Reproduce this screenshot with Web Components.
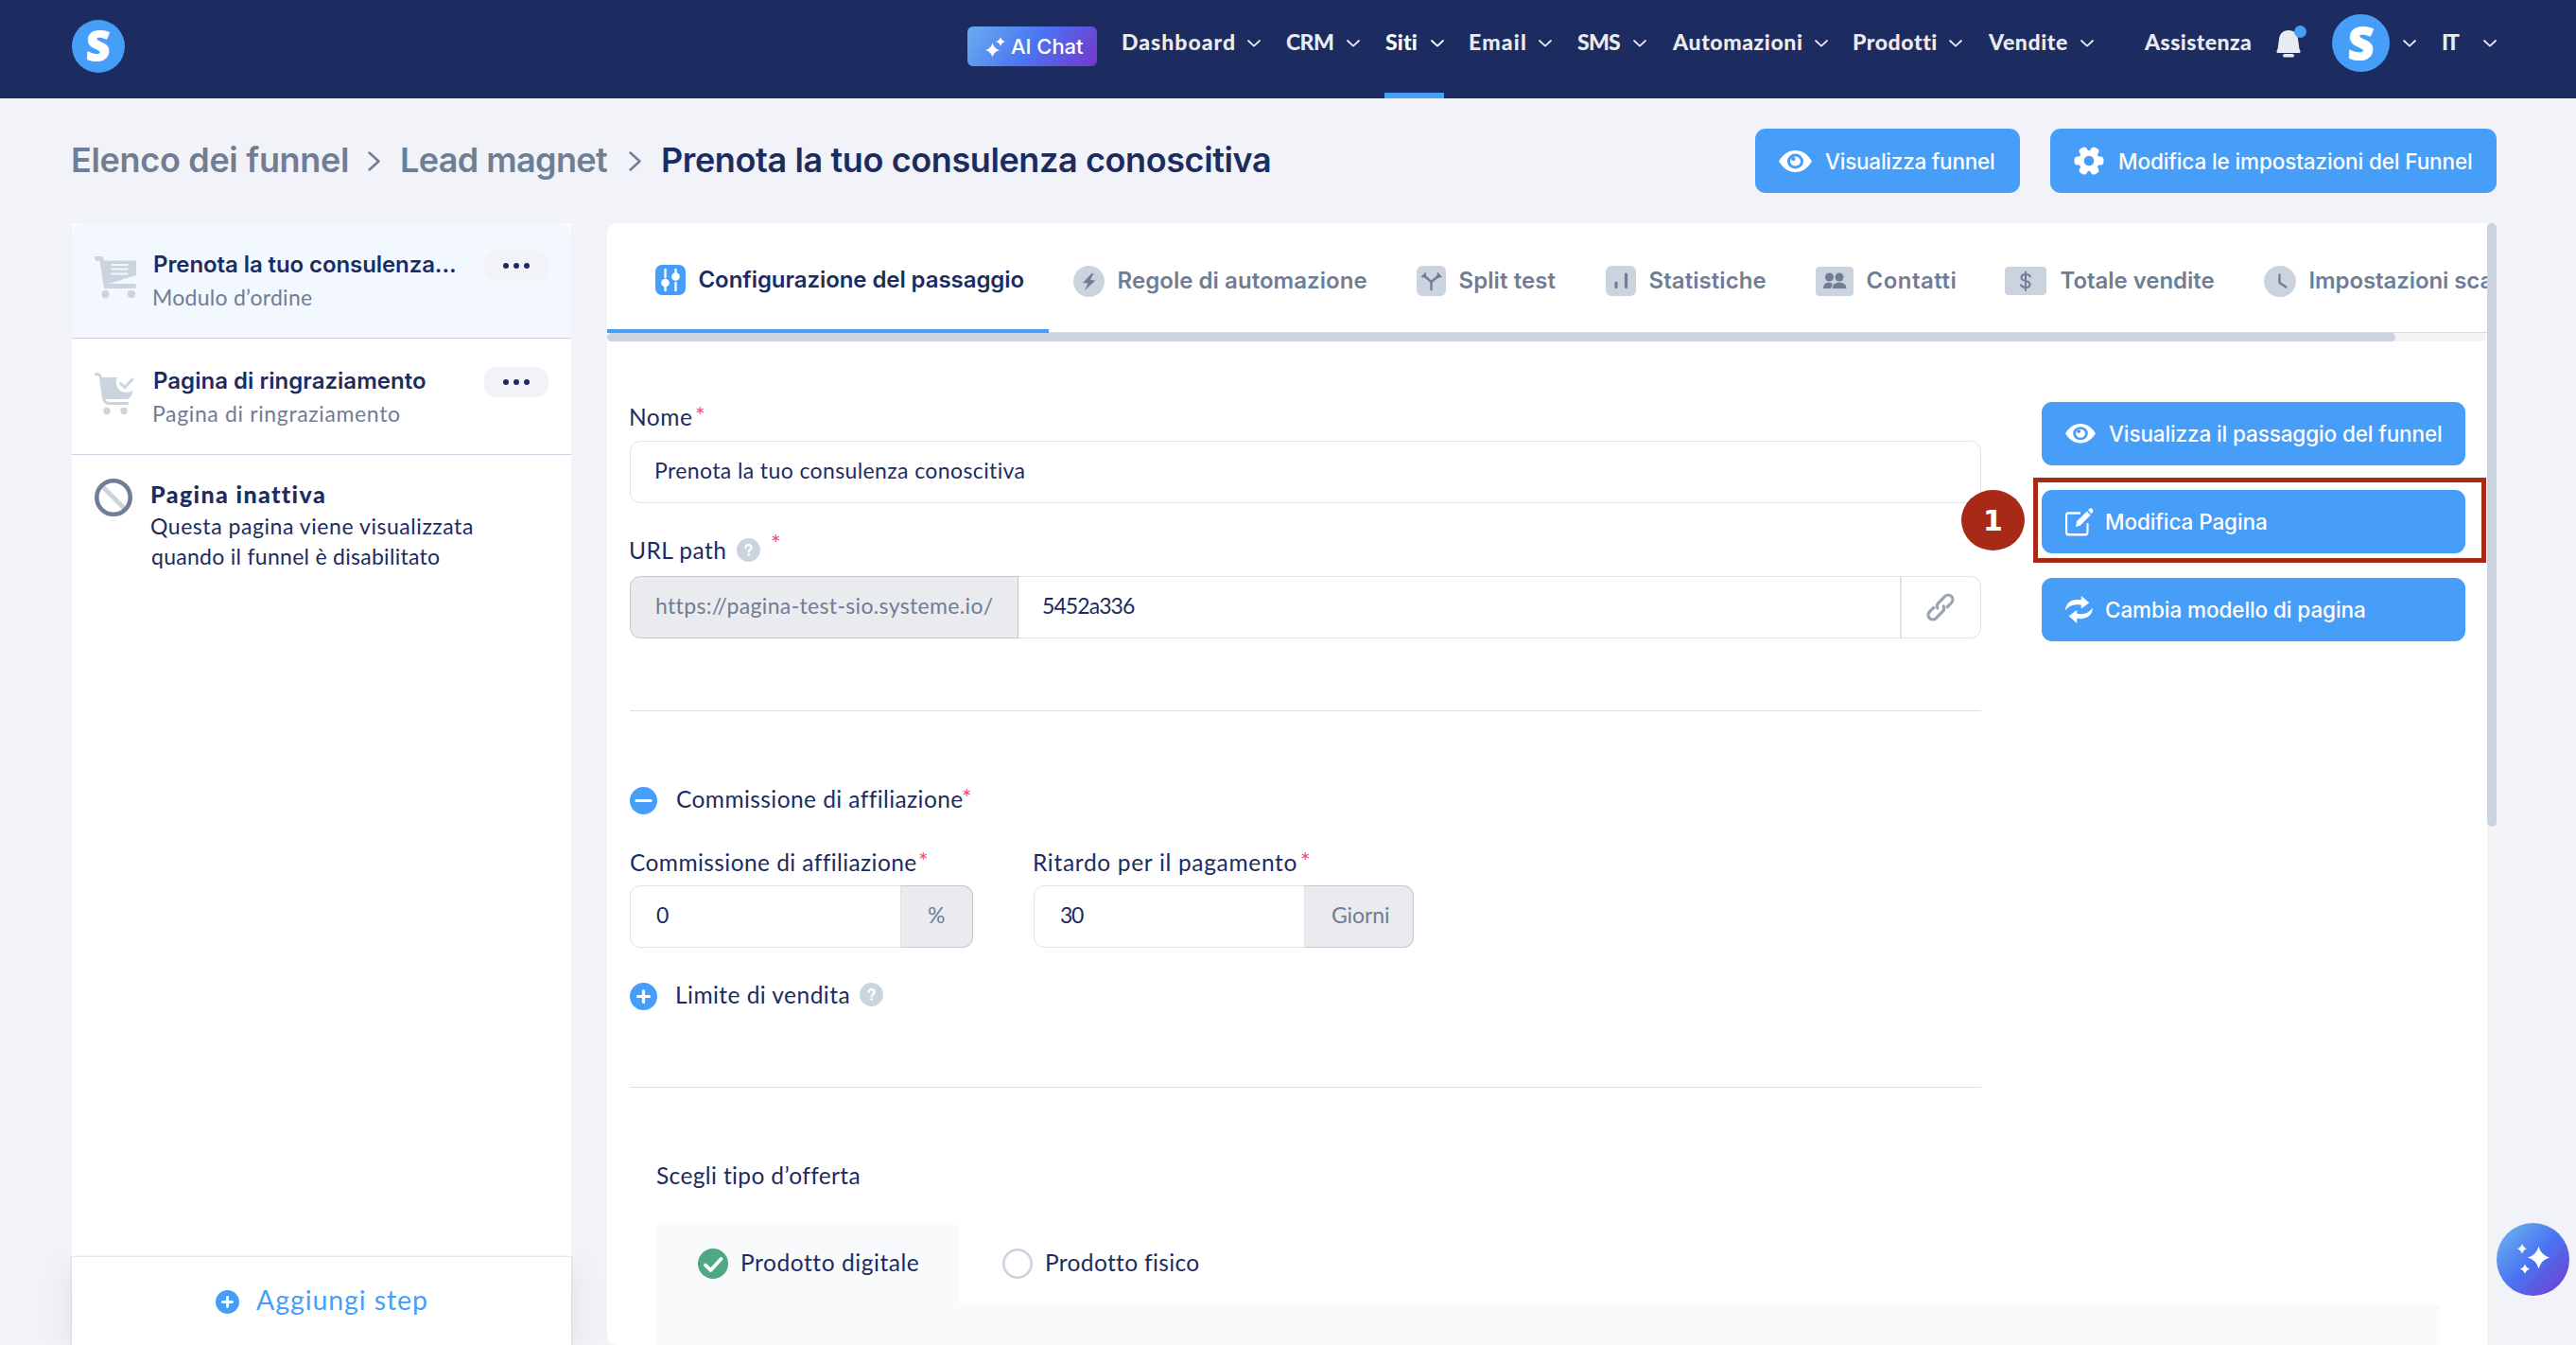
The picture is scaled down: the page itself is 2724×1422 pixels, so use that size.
<!DOCTYPE html>
<html lang="it">
<head>
<meta charset="utf-8">
<title>Prenota la tuo consulenza conoscitiva</title>
<style>
  html, body {
    margin: 0;
    width: 2724px;
    height: 1422px;
    overflow: hidden;
    background: #f2f3f8;
    color: #1c2c60;
    font-family: Lato, "Open Sans", sans-serif;
    font-size: 23px;
  }
</style>
</head>
<body>
<funnel-app></funnel-app>

<script>
const icons = {
  chevron: `<svg width="14" height="8" viewBox="0 0 14 8"><path d="M1 1l6 5.6L13 1" fill="none" stroke="currentColor" stroke-width="1.8" stroke-linecap="round" stroke-linejoin="round"/></svg>`,
  next: `<svg width="13" height="21" viewBox="0 0 13 21"><path d="M1.5 1.5l10 9-10 9" fill="none" stroke="currentColor" stroke-width="2.5" stroke-linecap="round" stroke-linejoin="round"/></svg>`,
  sparkle: `<svg width="22" height="23" viewBox="0 0 22 23"><path d="M7.500 7.500Q9 13.500 15 15Q9 16.500 7.500 22.500Q6 16.500 0 15Q6 13.500 7.500 7.500zM16 1Q17 5 21 6Q17 7 16 11Q15 7 11 6Q15 5 16 1z" fill="#fff"/></svg>`,
  bell: `<svg width="26" height="30" viewBox="0 0 26 30"><path d="M13 0C7 0 3.500 4 3 9.500L1.500 20 .6 21.500Q0 24 2 24h22q2 0 1.400-2.500L24.500 20 23 9.500C22.500 4 19 0 13 0z" fill="#e9ebf0"/><rect x="7" y="25" width="12" height="3.500" rx="1.700" fill="#e9ebf0"/></svg>`,
  eye: `<svg width="35" height="23" viewBox="0 0 34 24" preserveAspectRatio="none"><path d="M0 12C4 4.500 10 0 17 0s13 4.500 17 12c-4 7.500-10 12-17 12S4 19.500 0 12z" fill="#fff"/><circle cx="17" cy="12" r="8.300" fill="#479ef9"/><circle cx="17" cy="12" r="5.300" fill="#fff"/><circle cx="15" cy="9.500" r="2.200" fill="#479ef9"/></svg>`,
  eyeSmall: `<svg width="32" height="20.500" viewBox="0 0 34 24" preserveAspectRatio="none"><path d="M0 12C4 4.500 10 0 17 0s13 4.500 17 12c-4 7.500-10 12-17 12S4 19.500 0 12z" fill="#fff"/><circle cx="17" cy="12" r="8.300" fill="#479ef9"/><circle cx="17" cy="12" r="5.300" fill="#fff"/><circle cx="15" cy="9.500" r="2.200" fill="#479ef9"/></svg>`,
  gear: `<svg width="32" height="32" viewBox="0 0 32 32"><g fill="#fff"><circle cx="16" cy="16" r="11"/><rect x="11.500" y=".5" width="9" height="31" rx="3.500" transform="rotate(30 16 16)"/><rect x="11.500" y=".5" width="9" height="31" rx="3.500" transform="rotate(90 16 16)"/><rect x="11.500" y=".5" width="9" height="31" rx="3.500" transform="rotate(150 16 16)"/></g><circle cx="16" cy="16" r="5.300" fill="#479ef9"/></svg>`,
  edit: `<svg width="30" height="30" viewBox="0 0 34 30" preserveAspectRatio="none"><path d="M18 5.500H3.500Q1.200 5.500 1.200 8v17.500q0 2.800 2.600 2.800H24q2.600 0 2.600-2.800V16" fill="none" stroke="#fff" stroke-width="2.400"/><path d="M26 3.500l4.300 4L18 18.500 12.500 20l1.300-6zM27.300 2.300L29 .8q2-1.300 3.600.4 1.500 1.800 0 3.500l-1.300 1.500z" fill="#fff"/></svg>`,
  refresh: `<svg width="29" height="29" viewBox="0 0 32 30" preserveAspectRatio="none"><path d="M0 16C.5 7 8 2.500 18.500 4.500L18.500 0 28 7.500 18.500 14V10C10 8.500 4 10.500 0 16zM32 13c-.5 9-8 13.500-18.500 11.500V30L4 22l9.500-6.500V19.500C22 21 28 18.500 32 13z" fill="#fff"/></svg>`,
  cart: `<svg width="44" height="44" viewBox="0 0 44 44"><g fill="#cbd3df"><path d="M0 0h7q2 0 2.500 2.500L10 4.500h34V20L15 29h27q2 0 2 2.500T42 34H10L5.500 5H3Q0 4.500 0 0z"/><circle cx="11.500" cy="40" r="4.200"/><circle cx="39" cy="40" r="4.200"/></g><path d="M18.500 9h16M18.500 13.500h16M18.500 18.500h16" stroke="#f3f8ff" stroke-width="2" stroke-linecap="round"/></svg>`,
  cartCheck: `<svg width="42" height="44" viewBox="0 0 42 44"><g fill="#cbd3df"><path d="M6 5h18q-3 6 1 12 6 7 16 2l-2 5q-2 4-6 4H10z"/><circle cx="13" cy="40.500" r="3.700"/><circle cx="31" cy="40.500" r="3.700"/></g><path d="M1.500 1.500Q6 1.500 6.500 5l3 22q1 5.500 6 5.500H35M27.500 11.500l4.500 4L40 7" fill="none" stroke="#cbd3df" stroke-width="3" stroke-linecap="round"/></svg>`,
  ban: `<svg width="40" height="40" viewBox="0 0 40 40"><path d="M8.500 8.500l23 23" stroke="#cbd3df" stroke-width="5"/><circle cx="20" cy="20" r="17.700" fill="none" stroke="#6f7d95" stroke-width="4.600"/></svg>`,
  sliders: `<svg width="32" height="32" viewBox="0 0 32 32"><rect width="32" height="32" rx="7" fill="#479ef9"/><path d="M10.500 5v8M10.500 18v9M21.500 5v8M21.500 19v8" stroke="#fff" stroke-width="2.400" stroke-linecap="round"/><circle cx="10.500" cy="19" r="4.300" fill="#fff"/><circle cx="21.500" cy="12.500" r="4.300" fill="#fff"/></svg>`,
  bolt: `<svg width="33" height="33" viewBox="0 0 33 33"><circle cx="16.500" cy="16.500" r="16.500" fill="#cbd3df"/><path d="M19.500 8L10 18l5.500.5-3.500 7.500L23.500 15.500 18 15l3.500-7z" fill="#6f7d95"/></svg>`,
  split: `<svg width="31" height="32" viewBox="0 0 31 32"><rect width="31" height="32" rx="6" fill="#cbd3df"/><path d="M15.500 25V17L8 10.500M15.500 17l8-6.500" fill="none" stroke="#6f7d95" stroke-width="2.400" stroke-linecap="round"/><path d="M4.500 12L9.500 6.500 10.500 13zM27 12l-5-5.500-1 6.500z" fill="#6f7d95"/></svg>`,
  chart: `<svg width="32" height="32" viewBox="0 0 32 32"><rect width="32" height="32" rx="6" fill="#cbd3df"/><path d="M11 18v4.500M21.500 9v13.500" stroke="#6f7d95" stroke-width="3.200" stroke-linecap="round"/></svg>`,
  people: `<svg width="40" height="31" viewBox="0 0 40 31"><rect width="40" height="31" rx="4" fill="#cbd3df"/><g fill="#6f7d95"><circle cx="14.500" cy="11" r="4.500"/><circle cx="25" cy="11" r="4.500"/><path d="M8 23q0-6.500 6-6.500l4 1.500-2 5zM17.500 23q.5-6.500 7.500-6.500t7.500 6.500z"/></g></svg>`,
  dollar: `<svg width="44" height="30" viewBox="0 0 44 30"><rect width="44" height="30" rx="4" fill="#cbd3df"/><path d="M27 10.500Q26 8 22 8q-4.500 0-4.500 3.500 0 2.500 4.500 3.500t4.500 3.800Q26.500 22 22 22q-4 0-5-2.800M22 5.500V25" fill="none" stroke="#6f7d95" stroke-width="2" stroke-linecap="round"/></svg>`,
  clock: `<svg width="34" height="33" viewBox="0 0 34 33"><ellipse cx="17" cy="16.500" rx="17" ry="16.500" fill="#cbd3df"/><path d="M16.500 9.500V18l7 4.500" fill="none" stroke="#6f7d95" stroke-width="2.300" stroke-linecap="round" stroke-linejoin="round"/></svg>`,
  help: `<svg width="25" height="25" viewBox="0 0 25 25"><circle cx="12.500" cy="12.500" r="12.500" fill="#cbd3df"/><path d="M9.600 10q0-2.800 3-2.800t3 2.600q0 1.500-1.500 2.400-1.300.8-1.300 2.200" fill="none" stroke="#fff" stroke-width="2.200" stroke-linecap="round"/><circle cx="12.700" cy="17.600" r="1.400" fill="#fff"/></svg>`,
  link: `<svg width="30" height="30" viewBox="0 0 30 30"><g transform="translate(15 15) rotate(-45)" fill="none" stroke="#9aa5b1" stroke-width="3.200" stroke-linecap="round"><path d="M-5.500-4.800H-11.500a4.800 4.800 0 0 0 0 9.600H-1.500a4.800 4.800 0 0 0 4.500-3.300"/><path d="M5.500 4.800H11.500a4.800 4.800 0 0 0 0-9.600H1.500a4.800 4.800 0 0 0-4.500 3.300"/></g></svg>`,
  minus: `<svg width="29" height="29" viewBox="0 0 29 29"><circle cx="14.500" cy="14.500" r="14.500" fill="#479ef9"/><path d="M7 14.500h15" stroke="#fff" stroke-width="3.200" stroke-linecap="round"/></svg>`,
  plus: `<svg width="29" height="29" viewBox="0 0 29 29"><circle cx="14.500" cy="14.500" r="14.500" fill="#479ef9"/><path d="M8.500 14.500h12M14.500 8.500v12" stroke="#fff" stroke-width="3.200" stroke-linecap="round"/></svg>`,
  plusSmall: `<svg width="25" height="25" viewBox="0 0 25 25"><circle cx="12.500" cy="12.500" r="12.500" fill="#479ef9"/><path d="M7.500 12.500h10M12.500 7.500v10" stroke="#fff" stroke-width="2.800" stroke-linecap="round"/></svg>`,
  check: `<svg width="32" height="32" viewBox="0 0 32 32"><circle cx="16" cy="16" r="16" fill="#50a882"/><path d="M8 17.500l5.500 5.500 11-12" fill="none" stroke="#fff" stroke-width="3.800" stroke-linecap="round" stroke-linejoin="round"/></svg>`,
  radio: `<svg width="32" height="32" viewBox="0 0 32 32"><circle cx="16" cy="16" r="14.700" fill="none" stroke="#cbd3df" stroke-width="2.600"/></svg>`,
  stars: `<svg width="36" height="34" viewBox="0 0 36 34"><path d="M23.500 3Q26 12 35 14.500Q26 17 23.500 26.500Q21 17 12 14.500Q21 12 23.500 3zM6 0Q7.300 4 11 5.200Q7.300 6.500 6 10.500Q4.700 6.500 1 5.200Q4.700 4 6 0zM9 21.500Q10.300 25.300 14 26.500Q10.300 27.800 9 31.500Q7.700 27.800 4 26.500Q7.700 25.300 9 21.500z" fill="#fff"/></svg>`
};

function define(name, render) {
  customElements.define(name, class extends HTMLElement {
    constructor() {
      super();
      this.attachShadow({ mode: "open" });
    }
    connectedCallback() {
      const attr = (key) => this.getAttribute(key) || "";
      this.shadowRoot.innerHTML = render(attr);
    }
  });
}

define("ui-icon", (attr) => `
  <style>:host { display: inline-flex; flex: none; } svg { display: block; overflow: visible; }</style>
  ${icons[attr("name")]}
`);

define("brand-mark", (attr) => `
  <style>
    :host {
      display: flex; flex: none; align-items: center; justify-content: center;
      width: ${attr("size")}px; height: ${attr("size")}px;
      border-radius: 50%; background: #479ef9; color: #fff;
      font: 800 ${attr("size") * 0.78}px/1 "Open Sans", sans-serif;
    }
    span { transform: translateY(-1px) skewX(-2deg); -webkit-text-stroke: 1px #fff; }
  </style>
  <span>S</span>
`);

define("nav-item", (attr) => `
  <style>
    :host {
      display: flex; flex: none; align-items: center; gap: 14px; height: 104px;
      box-sizing: border-box; padding-bottom: 17px; margin-right: 26px;
      color: #e9ebf0; font-weight: 900; font-size: 23px;
    }
    :host([active]) { color: #fff; box-shadow: inset 0 -6px #479ef9; }
    ui-icon { padding-top: 4px; }
  </style>
  <fit-text w="${attr("w")}"><slot></slot></fit-text><ui-icon name="chevron"></ui-icon>
`);

define("app-bar", () => `
  <style>
    :host { display: flex; height: 104px; padding-left: 76px; background: #1c2c60; align-items: flex-start; }
    .logo { margin-top: 21px; }
    .chat {
      display: flex; align-items: center; gap: 4px; margin: 28px 26px 0 891px;
      width: 137px; height: 42px; box-sizing: border-box; padding-left: 19px;
      border-radius: 6px; background: linear-gradient(125deg, #69aeef, #4b74f2 50%, #7437cb);
      color: #fff; font: 500 22px Inter, sans-serif;
    }
    .plain { display: flex; align-items: center; height: 87px; color: #e9ebf0; font-weight: 900; font-size: 23px; }
    .help { margin: 0 27px 0 26px; }
    .bell { position: relative; margin-top: 32px; }
    .dot { position: absolute; left: 19px; top: -5px; width: 13px; height: 13px; border-radius: 50%; background: #479ef9; }
    .avatar { margin: 15px 14px 0 33px; }
    .down { margin-top: 42px; color: #e9ebf0; }
  </style>
  <brand-mark class="logo" size="56"></brand-mark>
  <div class="chat"><ui-icon name="sparkle"></ui-icon><fit-text w="78">AI Chat</fit-text></div>
  <nav-item w="119">Dashboard</nav-item>
  <nav-item w="51">CRM</nav-item>
  <nav-item w="35" active>Siti</nav-item>
  <nav-item w="60">Email</nav-item>
  <nav-item w="46">SMS</nav-item>
  <nav-item w="138">Automazioni</nav-item>
  <nav-item w="88">Prodotti</nav-item>
  <nav-item w="85">Vendite</nav-item>
  <div class="plain help"><fit-text w="114">Assistenza</fit-text></div>
  <div class="bell"><ui-icon name="bell"></ui-icon><div class="dot"></div></div>
  <brand-mark class="avatar" size="61"></brand-mark>
  <ui-icon class="down" name="chevron"></ui-icon>
  <div class="plain" style="margin: 0 25px 0 27px"><fit-text w="19">IT</fit-text></div>
  <ui-icon class="down" name="chevron"></ui-icon>
`);

define("action-button", (attr) => `
  <style>
    :host {
      display: flex; flex: none; align-items: center; box-sizing: border-box;
      width: ${attr("width")}px; height: ${attr("height") || 67}px; padding-left: 25px;
      border-radius: 11px; background: #479ef9; color: #fff;
      font: 500 22.5px Inter, sans-serif;
    }
    ui-icon { width: ${attr("box")}px; }
  </style>
  <ui-icon name="${attr("icon")}"></ui-icon><fit-text w="${attr("w")}"><slot></slot></fit-text>
`);

define("page-heading", () => `
  <style>
    :host { display: flex; height: 132px; align-items: center; padding: 0 84px 0 76px; color: #6f7d95; }
    .crumbs { display: flex; align-items: center; gap: 22px; font: 600 36px Inter, sans-serif; }
    .crumbs fit-text { margin-top: -2px; }
    .current { color: #1c2c60; }
    .actions { display: flex; gap: 32px; margin-left: auto; }
  </style>
  <div class="crumbs">
    <fit-text w="291">Elenco dei funnel</fit-text><ui-icon name="next"></ui-icon>
    <fit-text w="219">Lead magnet</fit-text><ui-icon name="next"></ui-icon>
    <fit-text class="current" w="643">Prenota la tuo consulenza conoscitiva</fit-text>
  </div>
  <div class="actions">
    <action-button icon="eye" width="280" height="68" box="48" w="180">Visualizza funnel</action-button>
    <action-button icon="gear" width="472" height="68" box="47" w="374">Modifica le impostazioni del Funnel</action-button>
  </div>
`);

define("step-card", (attr) => `
  <style>
    :host {
      display: flex; align-items: flex-start; box-sizing: border-box;
      height: ${attr("height")}px; padding: ${attr("pad")}px 24px 0; border-bottom: 1px solid #cbd3e3;
    }
    :host([active]) { background: #f3f8ff; border-radius: 10px 10px 0 0; }
    .icon { width: 62px; padding-top: 6px; }
    .text { display: flex; flex-direction: column; }
    .title { font: 600 24px/30px Inter, sans-serif; }
    .kind { color: #6f7d95; line-height: 30px; margin-top: 4px; }
    .menu {
      display: flex; align-items: center; justify-content: center; gap: 4.500px;
      width: 68px; height: 32px; margin-left: auto; border-radius: 13px; background: #f2f3f8;
    }
    i { width: 6.500px; height: 6.500px; border-radius: 50%; background: #1c2c60; }
  </style>
  <ui-icon class="icon" name="${attr("icon")}"></ui-icon>
  <div class="text">
    <fit-text class="title" w="${attr("tw")}"><slot></slot></fit-text>
    <fit-text class="kind" w="${attr("kw")}">${attr("kind")}</fit-text>
  </div>
  <div class="menu"><i></i><i></i><i></i></div>
`);

define("step-list", () => `
  <style>
    :host { display: flex; flex-direction: column; width: 528px; height: 1186px; background: #fff; }
    .inactive { display: flex; padding: 25px 24px 0; }
    .inactive ui-icon { width: 59px; }
    .title { font-weight: 900; font-size: 25px; line-height: 30px; margin-bottom: 3px; }
    .note { line-height: 32px; }
    .add {
      display: flex; align-items: center; gap: 17px; box-sizing: border-box; height: 93px; margin-top: auto;
      padding: 2px 0 0 152px; background: #fff; color: #479ef9; font-size: 28.5px;
      box-shadow: 0 0 2px rgba(0,0,0,.22), 0 8px 30px rgba(110,130,160,.14); clip-path: inset(-2px -50px 0);
    }
    .add fit-text { margin-top: -6px; }
  </style>
  <step-card active icon="cart" height="122" pad="29" tw="319" kind="Modulo d’ordine" kw="168">Prenota la tuo consulenza...</step-card>
  <step-card icon="cartCheck" height="123" pad="30" tw="288" kind="Pagina di ringraziamento" kw="261">Pagina di ringraziamento</step-card>
  <div class="inactive">
    <ui-icon name="ban"></ui-icon>
    <div>
      <fit-text class="title" style="margin-top: 1px" w="183">Pagina inattiva</fit-text>
      <fit-text class="note" w="341">Questa pagina viene visualizzata</fit-text>
      <fit-text class="note" w="306">quando il funnel è disabilitato</fit-text>
    </div>
  </div>
  <div class="add"><ui-icon name="plusSmall"></ui-icon><fit-text w="181">Aggiungi step</fit-text></div>
`);

define("tab-item", (attr) => `
  <style>
    :host {
      display: flex; flex: none; align-items: center; box-sizing: border-box; height: 116px;
      padding: 6px 26px 0 ${attr("pad") || 26.5}px; color: #6f7d95; font: 600 24px Inter, sans-serif;
    }
    :host([active]) { color: #1c2c60; box-shadow: inset 0 -4px #479ef9; padding-top: 4px; }
    fit-text { margin: -1px 0 0 13.500px; }
  </style>
  <ui-icon name="${attr("icon")}"></ui-icon><fit-text w="${attr("w")}"><slot></slot></fit-text>
`);

define("tab-strip", () => `
  <style>
    :host { display: block; overflow: hidden; }
    .tabs { display: flex; height: 116px; box-shadow: inset 0 -1px #d8dde8; }
    .track { height: 9px; border-radius: 5px; background: #f4f4f5; }
    .thumb { width: 1891px; height: 9px; border-radius: 5px; background: #cbd3df; }
  </style>
  <div class="tabs">
    <tab-item active icon="sliders" pad="51" w="344">Configurazione del passaggio</tab-item>
    <tab-item icon="bolt" w="264">Regole di automazione</tab-item>
    <tab-item icon="split" w="103">Split test</tab-item>
    <tab-item icon="chart" w="124">Statistiche</tab-item>
    <tab-item icon="people" w="94">Contatti</tab-item>
    <tab-item icon="dollar" w="164">Totale vendite</tab-item>
    <tab-item icon="clock" w="194">Impostazioni sca</tab-item>
  </div>
  <div class="track"><div class="thumb"></div></div>
`);

define("field-label", (attr) => `
  <style>
    :host { display: flex; align-items: center; height: 31px; gap: 11px; font-size: 24.5px; line-height: 31px; }
    .star { align-self: flex-start; margin: 1px 0 0 -7px; color: #f0506e; font-size: 25px; line-height: 26px; }
    .tight { margin-left: -10px; }
    ui-icon + .star { margin: -5px 0 0 0; }
  </style>
  <fit-text w="${attr("w")}"><slot></slot></fit-text>
  ${attr("help") ? `<ui-icon name="help"></ui-icon>` : ""}
  ${attr("required") ? `<span class="star ${attr("required")}">*</span>` : ""}
`);

define("input-box", (attr) => `
  <style>
    :host { display: flex; box-sizing: border-box; width: ${attr("width")}px; height: 66px; }
    div { display: flex; align-items: center; box-sizing: border-box; padding: 0 0 4px 26px; border: 1px solid #e0e3e7; }
    div:first-of-type { border-top-left-radius: 11px; border-bottom-left-radius: 11px; }
    div:last-of-type { border-top-right-radius: 11px; border-bottom-right-radius: 11px; }
    .value { flex: 1; }
    .addon { background: #eaebef; border-color: #c3c9d1; color: #6f7d95; }
    .addon + .value { border-left: 0; padding-left: 25px; }
    .value + .addon { border-left-color: #dfe2e7; margin-left: -1px; }
    .end { width: 86px; padding: 0 0 0 26px; margin-left: -1px; border-left-width: 2px; }
  </style>
  ${attr("before") ? `<div class="addon" style="width: 411px"><fit-text w="356">${attr("before")}</fit-text></div>` : ""}
  <div class="value"><fit-text w="${attr("w")}"><slot></slot></fit-text></div>
  ${attr("after") ? `<div class="addon" style="width: ${attr("aw")}px; padding-left: 28px"><fit-text w="${attr("atw")}">${attr("after")}</fit-text></div>` : ""}
  ${attr("link") ? `<div class="end"><ui-icon name="link"></ui-icon></div>` : ""}
`);

define("step-form", () => `
  <style>
    :host { display: block; padding: 64px 0 0 24px; }
    .cols { display: flex; gap: 64px; height: 725px; }
    .fields { width: 1429px; }
    hr { height: 1px; margin: 0; border: 0; background: #dce0e4; }
    .toggle { display: flex; align-items: center; gap: 20px; height: 29px; }
    .toggle field-label { margin-top: -4px; }
    .pair { display: flex; gap: 64px; margin: 35px 0 37px; }
    .side { position: relative; display: flex; flex-direction: column; gap: 26px; width: 448px; }
    .mark { position: absolute; left: -9px; top: 80px; width: 469px; height: 80px; border: 5px solid #a72a17; }
    .badge {
      position: absolute; left: -85px; top: 93px; width: 67px; height: 64px; border-radius: 50%;
      background: #a72a17; color: #fff; text-align: center; font: bold 30px/66px "DejaVu Sans", sans-serif;
    }
    .offer { padding: 77px 0 0 27px; }
    .choices { display: flex; margin-top: 35px; }
    .choice {
      display: flex; align-items: center; gap: 14px; box-sizing: border-box;
      width: 322px; height: 86px; padding-left: 45px; border-radius: 10px 10px 0 0; font-size: 24.5px;
    }
    .choice fit-text { margin-top: -3px; }
    .selected { background: #f9fafc; }
    .panel { width: 1887px; height: 60px; background: #f9fafc; }
  </style>
  <div class="cols">
    <div class="fields">
      <field-label w="65" required="1">Nome</field-label>
      <input-box style="margin-top: 10px" width="1429" w="390">Prenota la tuo consulenza conoscitiva</input-box>
      <field-label style="margin-top: 34px" w="102" help="1" required="1">URL path</field-label>
      <input-box style="margin-top: 12px" width="1429" w="98" before="https://pagina-test-sio.systeme.io/" link="1">5452a336</input-box>
      <hr style="margin: 76px 0 80px">
      <div class="toggle"><ui-icon name="minus"></ui-icon><field-label w="301" required="tight">Commissione di affiliazione</field-label></div>
      <div class="pair">
        <div>
          <field-label w="301" required="1">Commissione di affiliazione</field-label>
          <input-box style="margin-top: 9px" width="363" w="13" after="%" aw="77" atw="21">0</input-box>
        </div>
        <div>
          <field-label w="278" required="1">Ritardo per il pagamento</field-label>
          <input-box style="margin-top: 9px" width="402" w="26" after="Giorni" aw="116" atw="61">30</input-box>
        </div>
      </div>
      <div class="toggle"><ui-icon name="plus"></ui-icon><field-label w="183" help="1">Limite di vendita</field-label></div>
      <hr style="margin-top: 81px">
    </div>
    <div class="side">
      <action-button icon="eyeSmall" width="448" box="45" w="353">Visualizza il passaggio del funnel</action-button>
      <action-button icon="edit" width="448" box="42" w="171">Modifica Pagina</action-button>
      <action-button icon="refresh" width="448" box="42" w="275">Cambia modello di pagina</action-button>
      <div class="mark"></div>
      <div class="badge">1</div>
    </div>
  </div>
  <div class="offer">
    <field-label w="215">Scegli tipo d’offerta</field-label>
    <div class="choices">
      <div class="choice selected"><ui-icon name="check"></ui-icon><fit-text w="186">Prodotto digitale</fit-text></div>
      <div class="choice"><ui-icon name="radio"></ui-icon><fit-text w="160">Prodotto fisico</fit-text></div>
    </div>
    <div class="panel"></div>
  </div>
`);

define("funnel-app", () => `
  <style>
    :host { display: block; position: relative; width: 2724px; height: 1422px; overflow: hidden; }
    .content { display: flex; height: 1186px; padding-left: 76px; }
    .main { width: 1988px; height: 1186px; margin-left: 38px; overflow: hidden; background: #fff; border-radius: 10px 0 0 10px; }
    .scroll { width: 10px; background: #f4f4f5; border-radius: 5px; }
    .scroll div { height: 638px; border-radius: 5px; background: #cbd3df; }
    .assistant {
      position: absolute; left: 2640px; top: 1293px; width: 77px; height: 77px; box-sizing: border-box;
      padding: 22px 0 0 21px; border-radius: 50%;
      background: linear-gradient(135deg, #69b3ee 5%, #4b74f2 50%, #7437cb);
    }
  </style>
  <app-bar></app-bar>
  <page-heading></page-heading>
  <div class="content">
    <step-list></step-list>
    <div class="main">
      <tab-strip></tab-strip>
      <step-form></step-form>
    </div>
    <div class="scroll"><div></div></div>
  </div>
  <div class="assistant"><ui-icon name="stars"></ui-icon></div>
`);

// Tracks its text so that the ink spans `w` pixels.
class FitText extends HTMLElement {
  constructor() {
    super();
    this.attachShadow({ mode: "open" });
  }
  connectedCallback() {
    this.shadowRoot.innerHTML = `
      <style>
        :host { display: block; flex: none; width: ${this.getAttribute("w")}px; white-space: nowrap; }
        span { display: block; font-kerning: normal; font-variant-ligatures: none; }
      </style>
      <span><slot></slot></span>
    `;
    const slot = this.querySelector("slot");
    const text = (slot ? slot.assignedNodes().map((n) => n.textContent).join("") : this.textContent).trim();
    const css = getComputedStyle(this);
    const ctx = document.createElement("canvas").getContext("2d");
    ctx.font = `${css.fontWeight} ${css.fontSize} ${css.fontFamily}`;
    const m = ctx.measureText(text);
    const ink = m.actualBoundingBoxLeft + m.actualBoundingBoxRight;
    const span = this.shadowRoot.querySelector("span");
    span.style.marginLeft = `${m.actualBoundingBoxLeft + 1}px`;
    if (text.length > 1) {
      span.style.letterSpacing = `${(this.getAttribute("w") - 1 - ink) / (text.length - 1)}px`;
    }
  }
}
customElements.define("fit-text", FitText);
</script>
</body>
</html>
